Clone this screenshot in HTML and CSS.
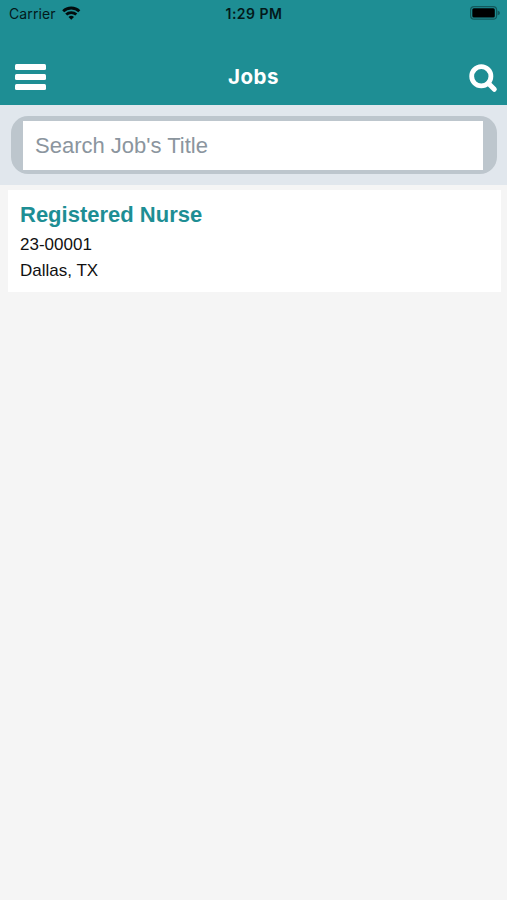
FILE: index.html
```html
<!DOCTYPE html>
<html lang="en">
<head>
<meta charset="utf-8">
<title>Jobs</title>
<link rel="stylesheet" href="styles.css">
</head>
<body>
<header class="header">
  <div class="status">
    <div class="carrier"><span>Carrier</span>
      <svg class="wifi" width="19" height="14" viewBox="0 0 19 14" fill="none" stroke="#020c0d" stroke-width="2.8"><path d="M1.200 5.200C5.500 .9 13 .9 17.300 5.200"/><path d="M4.200 8.600C7 5.900 11.500 5.900 14.300 8.600"/><path d="M9.250 13.700L6.500 11Q9.250 8.700 12 11Z" fill="#020c0d" stroke="none"/></svg>
    </div>
    <div class="time">1:29 PM</div>
    <svg class="battery" width="30" height="14" viewBox="0 0 30 14"><rect x=".6" y=".6" width="26" height="12.600" rx="3.500" fill="none" stroke="#12595c" stroke-width="1.200"/><rect x="2.300" y="2.300" width="22.500" height="9.200" rx="1.500" fill="#000"/><path d="M27.600 4.600Q30 5.300 30 6.900T27.600 9.200Z" fill="#12595c"/></svg>
  </div>
  <nav class="navbar">
    <div class="menu"><i></i><i></i><i></i></div>
    <h1 class="title">Jobs</h1>
    <svg class="search-icon" width="29" height="29" viewBox="0 0 29 29" fill="none" stroke="#fff"><circle cx="12.300" cy="12.300" r="9.600" stroke-width="4.800"/><path d="M19.300 19.300L25.300 25.300" stroke-width="5" stroke-linecap="round"/></svg>
  </nav>
</header>
<div class="searchbar"><div class="pill"><input class="field" type="text" placeholder="Search Job's Title"></div></div>
<main class="list">
  <article class="job">
    <h2 class="job-title">Registered Nurse</h2>
    <p class="job-line">23-00001</p>
    <p class="job-line">Dallas, TX</p>
  </article>
</main>
</body>
</html>
```
FILE: styles.css
```css
* { box-sizing: border-box; margin: 0; }
body { background: #f5f5f5; font-family: "Liberation Sans", Arial, sans-serif; min-height: 900px; }
.header { background: #1e8e94; height: 105px; color: #fff; }
.status { height: 50px; display: grid; grid-template-columns: 1fr auto 1fr; align-items: start; padding: 6px 7px 0 9px; font: 14px/16px Inter, sans-serif; color: #03191a; }
.carrier { display: flex; gap: 6px; letter-spacing: .1px; }
.time { font-weight: 600; letter-spacing: .5px; margin-right: 1px; }
.battery { justify-self: end; }
.navbar { height: 55px; display: grid; grid-template-columns: 1fr auto 1fr; align-items: start; padding: 14px 9px 0 15px; }
.menu { width: 31px; display: grid; gap: 4px; }
.menu i { height: 6px; border-radius: 1.5px; background: #fff; }
.title { margin-right: 6px; font: 700 20.5px/26px Inter, sans-serif; letter-spacing: .5px; }
.search-icon { justify-self: end; }
.searchbar { height: 80px; background: #e1e7ed; padding: 11px 10px 10px 11px; }
.pill { height: 58px; background: #bdc6cd; border-radius: 17px; padding: 5px 14px 4px 12px; }
.field { display: block; width: 100%; height: 49px; border: 0; border-radius: 0; padding: 0 12px; background: #fff; font: 22px "Liberation Sans", Arial, sans-serif; outline: 0; }
.field::placeholder { color: #8b959e; opacity: 1; }
.list { padding: 5px 6px 0 8px; }
.job { height: 102px; background: #fff; padding: 11px 12px; }
.job-title { color: #1e8e94; font-size: 22px; line-height: 28px; }
.job-line { color: #111; font-size: 17px; line-height: 26px; }
.job-title + .job-line { margin-top: 3px; }
```
